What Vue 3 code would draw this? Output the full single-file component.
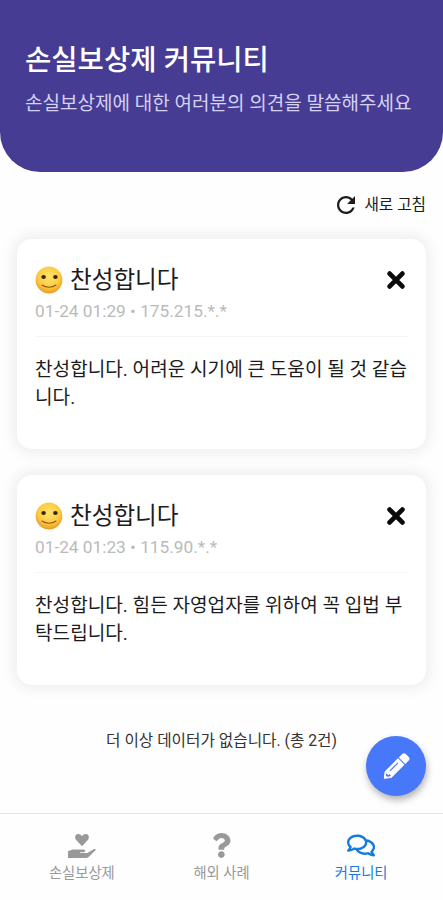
<script setup>
const posts = [
  {
    title: '찬성합니다',
    meta: '01-24 01:29 • 175.215.*.*',
    body: '찬성합니다. 어려운 시기에 큰 도움이 될 것 같습니다.',
  },
  {
    title: '찬성합니다',
    meta: '01-24 01:23 • 115.90.*.*',
    body: '찬성합니다. 힘든 자영업자를 위하여 꼭 입법 부탁드립니다.',
  },
]
</script>

<template>
  <div class="app">
    <header class="hero">
      <h1>손실보상제 커뮤니티</h1>
      <p>손실보상제에 대한 여러분의 의견을 말씀해주세요</p>
    </header>

    <main class="content">
      <button class="refresh">
        <svg viewBox="80 80 352 352" fill="currentColor">
          <path d="M256 388c-72.597 0-132-59.405-132-132 0-72.601 59.403-132 132-132 36.3 0 69.299 15.4 92.406 39.601L278 234h154V80l-51.698 51.702C348.406 99.798 304.406 80 256 80c-96.797 0-176 79.203-176 176s78.094 176 176 176c81.045 0 148.287-54.134 169.401-128H378.85c-18.745 49.561-67.138 84-122.85 84z" />
        </svg>
        <span>새로 고침</span>
      </button>

      <section class="list">
        <article v-for="post in posts" :key="post.meta" class="card">
          <div class="card-head">
            <svg class="face" viewBox="0 0 28 28">
              <defs>
                <radialGradient id="skin" cx="50%" cy="38%" r="62%">
                  <stop offset="0" stop-color="#ffe36b" />
                  <stop offset="0.65" stop-color="#fdca42" />
                  <stop offset="1" stop-color="#e99a22" />
                </radialGradient>
              </defs>
              <circle cx="14" cy="14" r="13.4" fill="url(#skin)" />
              <ellipse cx="8.6" cy="11" rx="2.3" ry="2.1" fill="#3d2608" />
              <ellipse cx="20.4" cy="11" rx="2.3" ry="2.1" fill="#3d2608" />
              <path d="M7 19c3.8 3 10.2 3 14 0" fill="none" stroke="#8a5a14" stroke-width="1.1" stroke-linecap="round" />
            </svg>
            <h2>{{ post.title }}</h2>
            <button class="close">
              <svg viewBox="0 0 20 20" fill="none" stroke="#0b0b0b" stroke-width="4.8" stroke-linecap="round">
                <path d="M3.6 3.6l12.8 12.8M16.4 3.6L3.6 16.4" />
              </svg>
            </button>
          </div>
          <div class="meta">{{ post.meta }}</div>
          <p class="body">{{ post.body }}</p>
        </article>
      </section>

      <p class="end">더 이상 데이터가 없습니다. (총 2건)</p>
    </main>

    <button class="fab">
      <svg viewBox="0 0 28 28">
        <g transform="rotate(-45 14 14)">
          <path d="M-3 14.500L2.2 10.4H20.400V18.600H2.2Z" fill="#fff" stroke="#fff" stroke-width="1" stroke-linejoin="round" />
          <path d="M22 9.900H26.600a2.800 2.800 0 0 1 2.800 2.800v3.600a2.800 2.800 0 0 1-2.800 2.800H22Z" fill="#fff" />
          <path d="M6.2 13.200H17.600" stroke="#4878fa" stroke-width="1.2" />
          <path d="M.2 13.300l1.800-1v2.800h1.800v2H2.600L.2 15.300Z" fill="#4878fa" />
        </g>
      </svg>
    </button>

    <nav class="tabs">
      <a class="tab">
        <svg viewBox="0 0 28 25" fill="currentColor">
          <path d="M14 13.200L8.200 7.100C6.400 5 6.800 1.200 10.100 1c1.700-.1 2.900.8 3.900 2.300C15 1.800 16.200.9 17.900 1c3.300.2 3.700 4 1.900 6.100Z" />
          <path d="M0 18.300L4.600 16.500H15.600q1.800.2 1.600 1.500-.2 1.100-1.700 1.200H12v.8h7.300L25.600 16.300q1.700-.7 2.400.5L20.300 24.200q-.8.800-2 .8H0Z" />
        </svg>
        <span>손실보상제</span>
      </a>
      <a class="tab">
        <svg viewBox="0 0 384 512" fill="currentColor">
          <path d="M202.021 0C122.202 0 70.503 32.703 29.914 91.026c-7.363 10.58-5.093 25.086 5.178 32.874l43.138 32.709c10.373 7.865 25.132 6.026 33.253-4.148 25.049-31.381 43.63-49.449 82.757-49.449 30.764 0 68.816 19.799 68.816 49.631 0 22.552-18.617 34.134-48.993 51.164-35.423 19.86-82.299 44.576-82.299 106.405V320c0 13.255 10.745 24 24 24h72.471c13.255 0 24-10.745 24-24v-5.773c0-42.86 125.268-44.645 125.268-160.627C377.504 66.256 286.902 0 202.021 0zM192 373.459c-38.196 0-69.271 31.075-69.271 69.271 0 38.195 31.075 69.27 69.271 69.27s69.271-31.075 69.271-69.271-31.075-69.27-69.271-69.27z" />
        </svg>
        <span>해외 사례</span>
      </a>
      <a class="tab active">
        <svg viewBox="0 0 576 512" fill="currentColor">
          <path d="M532 386.2c27.5-27.1 44-61.1 44-98.2 0-80-76.5-146.1-176.2-157.9C368.3 72.5 294.3 32 208 32 93.1 32 0 103.6 0 192c0 37 16.5 71 44 98.2-15.3 30.7-37.3 54.5-37.7 54.9-6.3 6.7-8.1 16.5-4.4 25 3.6 8.5 12 14 21.2 14 53.5 0 96.7-20.2 125.2-38.8 9.2 2.1 18.7 3.7 28.4 4.9C208.1 407.6 281.8 448 368 448c20.8 0 40.8-2.4 59.8-6.8C456.3 459.7 499.4 480 553 480c9.2 0 17.5-5.5 21.2-14 3.6-8.5 1.9-18.3-4.4-25-.4-.3-22.5-24.1-37.8-54.8zm-392.8-92.3L122.1 305c-14.1 9.1-28.5 16.3-43.1 21.4 2.7-4.7 5.4-9.7 8-14.8l15.5-31.1L77.7 256C64.2 242.6 48 220.7 48 192c0-60.7 73.3-112 160-112s160 51.3 160 112-73.3 112-160 112c-16.5 0-33-1.9-49-5.6l-19.8-4.5zM498.3 352l-24.7 24.4 15.5 31.1c2.6 5.1 5.3 10.1 8 14.8-14.6-5.1-29-12.3-43.1-21.4l-17.1-11.1-19.9 4.6c-16 3.7-32.5 5.6-49 5.6-54 0-102.2-20.1-131.3-49.7C338 339.5 416 272.9 416 192c0-3.4-.4-6.7-.7-10C479.7 196.5 528 238.8 528 288c0 28.7-16.2 50.6-29.7 64z" />
        </svg>
        <span>커뮤니티</span>
      </a>
    </nav>
  </div>
</template>

<style>
body {
  background: #fefefe;
}
</style>

<style scoped>
.app {
  position: relative;
  display: flex;
  flex-direction: column;
  width: 443px;
  height: 900px;
  overflow: hidden;
  background: #fefefe;
  color: #1c1c1c;
  font-family: Roboto, 'Noto Sans CJK KR', sans-serif;
}
h1, h2, p {
  margin: 0;
  font-weight: 400;
}
button {
  padding: 0;
  border: 0;
  background: none;
  color: inherit;
  font: inherit;
}
svg {
  display: block;
}
.hero {
  flex: none;
  box-sizing: border-box;
  height: 172px;
  padding: 40px 25px 0;
  border-radius: 0 0 40px 40px;
  background: #463c94;
  color: #fff;
  white-space: nowrap;
}
.hero h1 {
  font-size: 28.6px;
  font-weight: 500;
  line-height: 40px;
}
.hero p {
  margin-top: 10px;
  font-size: 19.05px;
  line-height: 28px;
  color: #d6d2f2;
}
.content {
  flex: 1;
  display: flex;
  flex-direction: column;
  padding: 21px 17px 0;
}
.refresh {
  display: flex;
  align-items: center;
  align-self: flex-end;
  gap: 9px;
  height: 24px;
  font-size: 15.7px;
  line-height: 24px;
  white-space: nowrap;
}
.refresh svg {
  width: 18px;
  height: 18px;
}
.list {
  display: flex;
  flex-direction: column;
  gap: 26px;
  margin-top: 22px;
}
.card {
  box-sizing: border-box;
  height: 210px;
  padding: 23px 18px 0;
  border-radius: 15px;
  background: #fff;
  box-shadow: 0 0 14px 4px rgba(0, 0, 0, 0.065);
}
.card-head {
  display: flex;
  align-items: center;
  height: 36px;
}
.face {
  width: 28px;
  height: 28px;
}
.card-head h2 {
  flex: 1;
  margin-left: 7px;
  font-size: 23.6px;
  line-height: 36px;
}
.close {
  margin: 0 2px 0 0;
}
.close svg {
  width: 20px;
  height: 20px;
}
.meta {
  height: 39px;
  box-sizing: border-box;
  border-bottom: 1px solid #f5f5f5;
  font-size: 17.25px;
  line-height: 26px;
  color: #bababa;
  white-space: nowrap;
}
.body {
  margin-top: 19px;
  font-size: 19.1px;
  line-height: 28px;
}
.end {
  margin-top: 44px;
  font-size: 15.7px;
  line-height: 24px;
  text-align: center;
  color: #333;
}
.fab {
  position: absolute;
  right: 17px;
  bottom: 104px;
  display: grid;
  place-items: center;
  width: 60px;
  height: 60px;
  border-radius: 50%;
  background: #4878fa;
  box-shadow: 1px 4px 7px rgba(0, 0, 0, 0.3);
}
.fab svg {
  width: 28px;
  height: 28px;
  overflow: visible;
}
.tabs {
  flex: none;
  display: grid;
  grid-template-columns: repeat(3, 1fr);
  box-sizing: border-box;
  height: 87px;
  padding: 19px 12px 0;
  border-top: 1px solid #e4e4e4;
}
.tab {
  display: flex;
  flex-direction: column;
  align-items: center;
  gap: 4px;
  font-size: 14.3px;
  line-height: 22px;
  color: #999;
  white-space: nowrap;
}
.tab svg {
  height: 25px;
}
.tab.active {
  color: #147be0;
}
</style>
